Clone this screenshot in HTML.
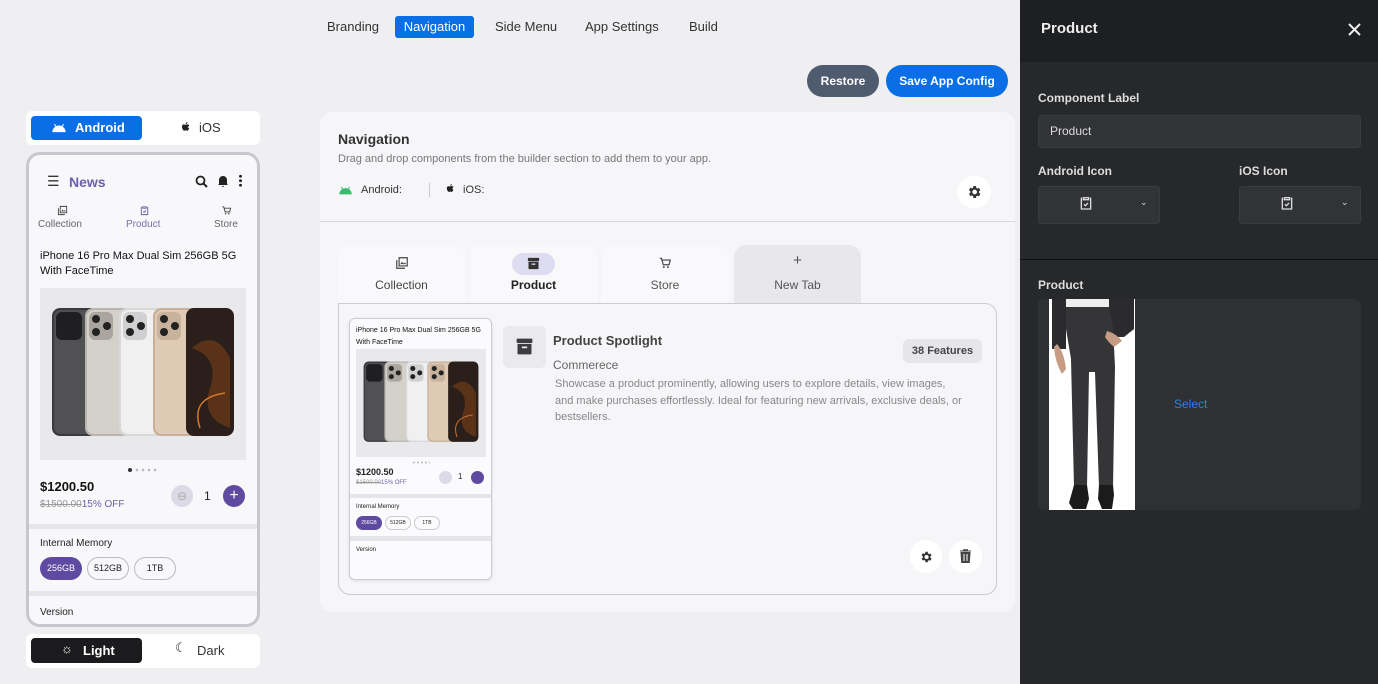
<!DOCTYPE html>
<html><head><meta charset="utf-8">
<style>
*{box-sizing:border-box;margin:0;padding:0}
body{width:1378px;height:684px;overflow:hidden;background:#efeef1;font-family:"Liberation Sans",sans-serif;position:relative;color:#222}
.a{position:absolute}
.nav span{position:absolute;top:16px;height:22px;line-height:22px;font-size:13px;color:#333}
.btn{position:absolute;border-radius:16px;color:#fff;font-weight:bold;font-size:12px;text-align:center;line-height:32px}
.t{font-size:10px;color:#666}
svg{display:block}
</style></head><body>
<svg width="0" height="0" style="position:absolute">
<defs>
<symbol id="phones" viewBox="0 0 206 172">
<rect width="206" height="172" fill="#e9e8eb"/>
<rect x="12" y="20" width="52" height="128" rx="8" fill="#3a3a3c"/>
<rect x="14" y="22" width="48" height="124" rx="7" fill="#515154"/>
<rect x="16" y="24" width="26" height="28" rx="6" fill="#1f1f21"/>
<rect x="45" y="20" width="52" height="128" rx="8" fill="#b9b6b0"/>
<rect x="47" y="22" width="48" height="124" rx="7" fill="#d4d1cb"/>
<rect x="49" y="24" width="24" height="28" rx="6" fill="#aaa69f"/>
<circle cx="56" cy="31" r="4" fill="#222"/><circle cx="56" cy="44" r="4" fill="#222"/><circle cx="67" cy="38" r="4" fill="#222"/>
<rect x="79" y="20" width="52" height="128" rx="8" fill="#d8d8da"/>
<rect x="81" y="22" width="48" height="124" rx="7" fill="#f0f0f1"/>
<rect x="83" y="24" width="24" height="28" rx="6" fill="#d0d0d2"/>
<circle cx="90" cy="31" r="4" fill="#222"/><circle cx="90" cy="44" r="4" fill="#222"/><circle cx="101" cy="38" r="4" fill="#222"/>
<rect x="113" y="20" width="52" height="128" rx="8" fill="#c8b09a"/>
<rect x="115" y="22" width="48" height="124" rx="7" fill="#dfcab6"/>
<rect x="117" y="24" width="24" height="28" rx="6" fill="#c9b29c"/>
<circle cx="124" cy="31" r="4" fill="#222"/><circle cx="124" cy="44" r="4" fill="#222"/><circle cx="135" cy="38" r="4" fill="#222"/>
<rect x="146" y="20" width="48" height="128" rx="8" fill="#2a1f1a"/>
<path d="M152 60 Q175 40 190 70 L190 140 Q160 130 170 100 Q180 70 152 60Z" fill="#5a3218"/>
<path d="M160 140 Q150 110 185 105" stroke="#d07830" stroke-width="1.5" fill="none"/>
</symbol>
<symbol id="clip" viewBox="0 0 24 24"><path d="M8 4h8v3H8z M6 5H5v16h14V5h-1" fill="none" stroke="currentColor" stroke-width="2"/><path d="M9 14l2 2 4-4" fill="none" stroke="currentColor" stroke-width="2"/></symbol>
<symbol id="gear" viewBox="0 0 24 24"><path fill="currentColor" d="M19.4 13a7.5 7.5 0 000-2l2.1-1.6-2-3.5-2.5 1a7 7 0 00-1.7-1L15 3h-4l-.4 2.6a7 7 0 00-1.7 1l-2.5-1-2 3.5L6.6 11a7.5 7.5 0 000 2l-2.1 1.6 2 3.5 2.5-1a7 7 0 001.7 1L11 21h4l.4-2.6a7 7 0 001.7-1l2.5 1 2-3.5zM13 15.5a3.5 3.5 0 110-7 3.5 3.5 0 010 7z"/></symbol>
<symbol id="coll" viewBox="0 0 24 24"><path d="M7 3h14v14H7z M3 7v14h14" fill="none" stroke="currentColor" stroke-width="2"/><path d="M9 14l3-4 3 3 2-2 2 3z" fill="currentColor"/></symbol>
<symbol id="cart" viewBox="0 0 24 24"><path d="M3 4h3l3 11h10l2-8H7" fill="none" stroke="currentColor" stroke-width="2"/><circle cx="10" cy="19" r="1.6" fill="currentColor"/><circle cx="17" cy="19" r="1.6" fill="currentColor"/></symbol>
<symbol id="box" viewBox="0 0 24 24"><rect x="3" y="3" width="18" height="5" rx="1" fill="currentColor"/><path d="M4 9h16v11a1 1 0 01-1 1H5a1 1 0 01-1-1z" fill="currentColor"/><rect x="9" y="12" width="6" height="2" fill="#eee"/></symbol>
<symbol id="droid" viewBox="0 0 24 16"><path d="M2 15a10 10 0 0120 0z" fill="currentColor"/><path d="M5 3l3 4M19 3l-3 4" stroke="currentColor" stroke-width="1.5"/></symbol>
<symbol id="apple" viewBox="0 0 24 24"><path fill="currentColor" d="M16.5 12.6c0-2.6 2.1-3.8 2.2-3.9-1.2-1.8-3.1-2-3.700-2-1.6-.2-3.1.9-3.9.9s-2-.9-3.4-.9C5.9 6.7 4 8 4 11.5c0 2.1.8 4.4 1.8 5.8.9 1.2 1.6 2.2 2.8 2.2 1.1 0 1.5-.7 2.9-.7s1.7.7 2.9.7 2-1.1 2.7-2.2c.9-1.3 1.2-2.5 1.2-2.6 0 0-2.8-1-2.8-2.1zM14 5c.6-.8 1-1.8.9-2.8-.9 0-2 .6-2.6 1.4-.6.6-1 1.7-.9 2.700 1 .1 2-.5 2.6-1.3z"/></symbol>
</defs></svg>

<!-- top nav -->
<div class="nav">
<span style="left:327px">Branding</span>
<span style="left:395px;width:79px;background:#0a6ee6;color:#fff;border-radius:3px;text-align:center">Navigation</span>
<span style="left:495px">Side Menu</span>
<span style="left:585px">App Settings</span>
<span style="left:689px">Build</span>
</div>
<div class="btn" style="left:807px;top:65px;width:72px;background:#4f5b6e">Restore</div>
<div class="btn" style="left:886px;top:65px;width:122px;background:#0a6ee6">Save App Config</div>

<!-- left phone -->
<div class="a" style="left:26px;top:111px;width:234px;height:34px;background:#fff;border-radius:6px"></div>
<div class="a" style="left:31px;top:116px;width:111px;height:24px;background:#0a6ee6;border-radius:4px;color:#fff;font-weight:bold;font-size:13px;line-height:24px;padding-left:44px">Android</div>
<svg class="a" style="left:51px;top:122px;color:#fff" width="16" height="11"><use href="#droid"/></svg>
<svg class="a" style="left:180px;top:121px;color:#222" width="12" height="12"><use href="#apple"/></svg>
<div class="a" style="left:199px;top:116px;font-size:13px;line-height:24px;color:#333">iOS</div>

<div class="a" style="left:26px;top:152px;width:234px;height:475px;border:3px solid #c9c7cd;border-radius:14px;background:#e6e5e9;overflow:hidden">
 <div class="a" style="left:0;top:0;width:228px;height:369px;background:#f8f7fa"></div>
 <div class="a" style="left:18px;top:18px;font-size:14px;color:#333">&#9776;</div>
 <div class="a" style="left:40px;top:19px;font-size:14px;font-weight:bold;color:#6e60a8">News</div>
 <svg class="a" style="left:166px;top:20px" width="13" height="13" viewBox="0 0 13 13"><circle cx="5.5" cy="5.5" r="4" fill="none" stroke="#222" stroke-width="1.8"/><path d="M8.5 8.5l3.5 3.5" stroke="#222" stroke-width="2"/></svg>
 <svg class="a" style="left:188px;top:20px" width="12" height="13" viewBox="0 0 12 13"><path d="M6 1a4 4 0 00-4 4v4L1 10h10l-1-1V5a4 4 0 00-4-4zM5 11h2a1 1 0 01-2 0z" fill="#222"/></svg>
 <div class="a" style="left:210px;top:19px;width:3px;height:13px;background:radial-gradient(circle,#222 1.3px,transparent 1.6px) 0 0/3px 4.5px"></div>
 <svg class="a" style="left:28px;top:50px;color:#444" width="11" height="11"><use href="#coll"/></svg>
 <div class="a t" style="left:9px;top:64px">Collection</div>
 <svg class="a" style="left:110px;top:50px;color:#6e60a8" width="11" height="11"><use href="#clip"/></svg>
 <div class="a t" style="left:97px;top:64px;color:#7a6fb0">Product</div>
 <svg class="a" style="left:192px;top:50px;color:#444" width="11" height="11"><use href="#cart"/></svg>
 <div class="a t" style="left:185px;top:64px">Store</div>
 <div class="a" style="left:11px;top:94px;width:205px;font-size:11px;line-height:15px;color:#111">iPhone 16 Pro Max Dual Sim 256GB 5G With FaceTime</div>
 <svg class="a" style="left:11px;top:133px" width="206" height="172"><use href="#phones"/></svg>
 <div class="a" style="left:99px;top:313px;width:30px;height:4px;background:radial-gradient(circle,#bbb 1.2px,transparent 1.5px) 0 0/6px 4px"></div>
 <div class="a" style="left:99px;top:313px;width:4px;height:4px;border-radius:2px;background:#333"></div>
 <div class="a" style="left:11px;top:324px;font-size:13px;font-weight:bold;color:#111">$1200.50</div>
 <div class="a" style="left:11px;top:344px;font-size:10px;color:#6e60a8"><s style="color:#999">$1500.00</s>15% OFF</div>
 <div class="a" style="left:142px;top:330px;width:22px;height:22px;border-radius:11px;background:#dcdae6;color:#aaa;font-size:12px;text-align:center;line-height:22px">&#8854;</div>
 <div class="a" style="left:175px;top:334px;font-size:12px">1</div>
 <div class="a" style="left:194px;top:330px;width:22px;height:22px;border-radius:11px;background:#5e4aa0;color:#fff;font-size:16px;text-align:center;line-height:22px">+</div>
 <div class="a" style="left:0;top:374px;width:228px;height:62px;background:#f8f7fa"></div>
 <div class="a" style="left:11px;top:383px;font-size:10px;color:#222">Internal Memory</div>
 <div class="a" style="left:11px;top:402px;width:42px;height:23px;border-radius:12px;background:#5e4aa0;color:#fff;font-size:9px;text-align:center;line-height:23px">256GB</div>
 <div class="a" style="left:58px;top:402px;width:42px;height:23px;border-radius:12px;border:1px solid #bbb;font-size:9px;text-align:center;line-height:21px">512GB</div>
 <div class="a" style="left:105px;top:402px;width:42px;height:23px;border-radius:12px;border:1px solid #bbb;font-size:9px;text-align:center;line-height:21px">1TB</div>
 <div class="a" style="left:0;top:441px;width:228px;height:40px;background:#f8f7fa"></div>
 <div class="a" style="left:11px;top:452px;font-size:10px;color:#222">Version</div>
</div>

<div class="a" style="left:26px;top:634px;width:234px;height:34px;background:#fff;border-radius:6px"></div>
<div class="a" style="left:31px;top:638px;width:111px;height:25px;background:#1b1b1d;border-radius:4px;color:#fff;font-weight:bold;font-size:13px;line-height:25px;padding-left:52px">Light</div>
<div class="a" style="left:61px;top:641px;color:#fff;font-size:13px">&#9788;</div>
<div class="a" style="left:175px;top:640px;color:#222;font-size:13px">&#9790;</div>
<div class="a" style="left:197px;top:638px;font-size:13px;line-height:25px;color:#333">Dark</div>

<!-- center card -->
<div class="a" style="left:320px;top:112px;width:695px;height:500px;background:#f6f5f8;border-radius:12px"></div>
<div class="a" style="left:338px;top:131px;font-size:14px;font-weight:bold;color:#333">Navigation</div>
<div class="a" style="left:338px;top:153px;font-size:11px;color:#777">Drag and drop components from the builder section to add them to your app.</div>
<svg class="a" style="left:338px;top:185px;color:#3cba6e" width="15" height="10"><use href="#droid"/></svg>
<div class="a" style="left:361px;top:184px;font-size:11px;color:#333">Android:</div>
<div class="a" style="left:429px;top:183px;width:1px;height:14px;background:#ccc"></div>
<svg class="a" style="left:445px;top:183px;color:#222" width="11" height="11"><use href="#apple"/></svg>
<div class="a" style="left:463px;top:184px;font-size:11px;color:#333">iOS:</div>
<div class="a" style="left:957px;top:176px;width:34px;height:32px;border-radius:16px;background:#fff"></div>
<svg class="a" style="left:966px;top:184px;color:#333" width="16" height="16"><use href="#gear"/></svg>
<div class="a" style="left:320px;top:221px;width:695px;height:1px;background:#d8d7dc"></div>

<!-- tabs -->
<div class="a" style="left:338px;top:245px;width:127px;height:58px;background:#f9f8fb;border-radius:12px 12px 0 0"></div>
<div class="a" style="left:470px;top:245px;width:127px;height:58px;background:#f9f8fb;border-radius:12px 12px 0 0"></div>
<div class="a" style="left:601px;top:245px;width:128px;height:58px;background:#f9f8fb;border-radius:12px 12px 0 0"></div>
<div class="a" style="left:734px;top:245px;width:127px;height:58px;background:#e8e7eb;border-radius:12px 12px 0 0"></div>
<svg class="a" style="left:395px;top:256px;color:#444" width="14" height="14"><use href="#coll"/></svg>
<div class="a" style="left:338px;top:278px;width:127px;text-align:center;font-size:12px;color:#444">Collection</div>
<div class="a" style="left:512px;top:253px;width:43px;height:22px;border-radius:11px;background:#dedcf0"></div>
<svg class="a" style="left:526px;top:256px;color:#333" width="15" height="15"><use href="#box"/></svg>
<div class="a" style="left:470px;top:278px;width:127px;text-align:center;font-size:12px;font-weight:bold;color:#222">Product</div>
<svg class="a" style="left:658px;top:256px;color:#444" width="14" height="14"><use href="#cart"/></svg>
<div class="a" style="left:601px;top:278px;width:128px;text-align:center;font-size:12px;color:#555">Store</div>
<div class="a" style="left:734px;top:252px;width:127px;text-align:center;font-size:15px;color:#555">+</div>
<div class="a" style="left:734px;top:278px;width:127px;text-align:center;font-size:12px;color:#555">New Tab</div>

<div class="a" style="left:338px;top:303px;width:659px;height:292px;border:1px solid #ccc;border-radius:0 12px 12px 12px"></div>

<!-- mini phone -->
<div class="a" style="left:349px;top:318px;width:143px;height:262px;border:1px solid #ccc;border-radius:6px;background:#e6e5e9;overflow:hidden;box-shadow:0 1px 3px rgba(0,0,0,.1)">
 <div class="a" style="left:0;top:0;width:141px;height:175px;background:#fbfbfd"></div>
 <div class="a" style="left:6px;top:6px;width:132px;font-size:7px;line-height:12px;color:#111">iPhone 16 Pro Max Dual Sim 256GB 5G With FaceTime</div>
 <svg class="a" style="left:6px;top:30px" width="130" height="108" viewBox="0 0 206 172" preserveAspectRatio="none"><use href="#phones"/></svg>
 <div class="a" style="left:62px;top:142px;width:18px;height:3px;background:radial-gradient(circle,#bbb .8px,transparent 1px) 0 0/4px 3px"></div>
 <div class="a" style="left:6px;top:148px;font-size:9px;font-weight:bold">$1200.50</div>
 <div class="a" style="left:6px;top:161px;font-size:6px;color:#6e60a8"><s style="color:#999">$1500.00</s>15% OFF</div>
 <div class="a" style="left:89px;top:152px;width:13px;height:13px;border-radius:7px;background:#dcdae6"></div>
 <div class="a" style="left:108px;top:153px;font-size:8px">1</div>
 <div class="a" style="left:121px;top:152px;width:13px;height:13px;border-radius:7px;background:#5e4aa0"></div>
 <div class="a" style="left:0;top:179px;width:141px;height:38px;background:#fbfbfd"></div>
 <div class="a" style="left:6px;top:185px;font-size:6px">Internal Memory</div>
 <div class="a" style="left:6px;top:197px;width:26px;height:14px;border-radius:7px;background:#5e4aa0;color:#fff;font-size:5px;text-align:center;line-height:14px">256GB</div>
 <div class="a" style="left:35px;top:197px;width:26px;height:14px;border-radius:7px;border:1px solid #ccc;font-size:5px;text-align:center;line-height:12px">512GB</div>
 <div class="a" style="left:64px;top:197px;width:26px;height:14px;border-radius:7px;border:1px solid #ccc;font-size:5px;text-align:center;line-height:12px">1TB</div>
 <div class="a" style="left:0;top:222px;width:141px;height:40px;background:#fbfbfd"></div>
 <div class="a" style="left:6px;top:228px;font-size:6px">Version</div>
</div>

<div class="a" style="left:503px;top:326px;width:43px;height:42px;border-radius:6px;background:#eae9ed"></div>
<svg class="a" style="left:514px;top:336px;color:#3d3d40" width="21" height="21"><use href="#box"/></svg>
<div class="a" style="left:553px;top:333px;font-size:13px;font-weight:bold;color:#444">Product Spotlight</div>
<div class="a" style="left:553px;top:358px;font-size:12px;color:#666">Commerece</div>
<div class="a" style="left:555px;top:376px;width:410px;font-size:11px;line-height:16.5px;color:#888">Showcase a product prominently, allowing users to explore details, view images, and make purchases effortlessly. Ideal for featuring new arrivals, exclusive deals, or bestsellers.</div>
<div class="a" style="left:903px;top:339px;width:79px;height:24px;border-radius:6px;background:#e6e5e9;font-size:11px;color:#444;text-align:center;line-height:24px;font-weight:bold">38 Features</div>
<div class="a" style="left:910px;top:540px;width:32px;height:33px;border-radius:16px;background:#fff"></div>
<svg class="a" style="left:919px;top:550px;color:#333" width="14" height="14"><use href="#gear"/></svg>
<div class="a" style="left:949px;top:540px;width:33px;height:33px;border-radius:16px;background:#fff"></div>
<svg class="a" style="left:959px;top:549px" width="13" height="14" viewBox="0 0 13 14"><path d="M1 2h11M4.5 2V.8h4V2M2 3.5h9l-.7 10H2.7z" fill="#444" stroke="#444" stroke-width="1"/><path d="M5 5v7M8 5v7" stroke="#fff" stroke-width="1"/></svg>

<!-- right panel -->
<div class="a" style="left:1020px;top:0;width:358px;height:684px;background:#27282a"></div>
<div class="a" style="left:1020px;top:0;width:358px;height:62px;background:#1e1f21"></div>
<div class="a" style="left:1041px;top:20px;font-size:15px;font-weight:bold;color:#eee">Product</div>
<svg class="a" style="left:1348px;top:23px" width="13" height="13"><path d="M1 1l11 11M12 1L1 12" stroke="#eee" stroke-width="2"/></svg>
<div class="a" style="left:1038px;top:91px;font-size:12px;font-weight:bold;color:#ddd">Component Label</div>
<div class="a" style="left:1038px;top:115px;width:323px;height:33px;border-radius:4px;background:#323336;border:1px solid #3a3b3e;font-size:12px;color:#ddd;line-height:31px;padding-left:11px">Product</div>
<div class="a" style="left:1038px;top:164px;font-size:12px;font-weight:bold;color:#ddd">Android Icon</div>
<div class="a" style="left:1239px;top:164px;font-size:12px;font-weight:bold;color:#ddd">iOS Icon</div>
<div class="a" style="left:1038px;top:186px;width:122px;height:38px;border-radius:3px;background:#323336;border:1px solid #3a3b3e"></div>
<svg class="a" style="left:1078px;top:195px;color:#ddd" width="16" height="16"><use href="#clip"/></svg>
<div class="a" style="left:1140px;top:197px;font-size:9px;color:#ddd">&#8964;</div>
<div class="a" style="left:1239px;top:186px;width:122px;height:38px;border-radius:3px;background:#323336;border:1px solid #3a3b3e"></div>
<svg class="a" style="left:1279px;top:195px;color:#ddd" width="16" height="16"><use href="#clip"/></svg>
<div class="a" style="left:1341px;top:197px;font-size:9px;color:#ddd">&#8964;</div>
<div class="a" style="left:1020px;top:259px;width:358px;height:1px;background:#111"></div>
<div class="a" style="left:1038px;top:278px;font-size:12px;font-weight:bold;color:#ddd">Product</div>
<div class="a" style="left:1038px;top:299px;width:323px;height:211px;border-radius:6px;background:#2f3034"></div>
<svg class="a" style="left:1049px;top:299px" width="86" height="211" viewBox="0 0 86 211">
<rect width="86" height="211" fill="#fff"/>
<path d="M3 0h14v50H3z" fill="#2b2b2d"/>
<path d="M60 0h25v30l-10 8H60z" fill="#2b2b2d"/>
<path d="M17 0h43v8H17z" fill="#eee"/>
<path d="M17 8h43l4 20 2 40-2 120H50l-4-115h-6l-2 115H25L22 60 17 30z" fill="#353436"/>
<path d="M25 186h13l2 14-3 10H24l-4-6zM50 186h14l1 10-2 14H53l-4-10z" fill="#1b1b1b"/>
<path d="M8 45q7 8 9 25l-4 5q-7-12-8-27z" fill="#c79c84"/>
<path d="M58 32q10 3 15 10l-8 6q-6-5-9-10z" fill="#c79c84"/>
</svg>
<div class="a" style="left:1174px;top:397px;font-size:12px;color:#2f7fe6">Select</div>
</body></html>
